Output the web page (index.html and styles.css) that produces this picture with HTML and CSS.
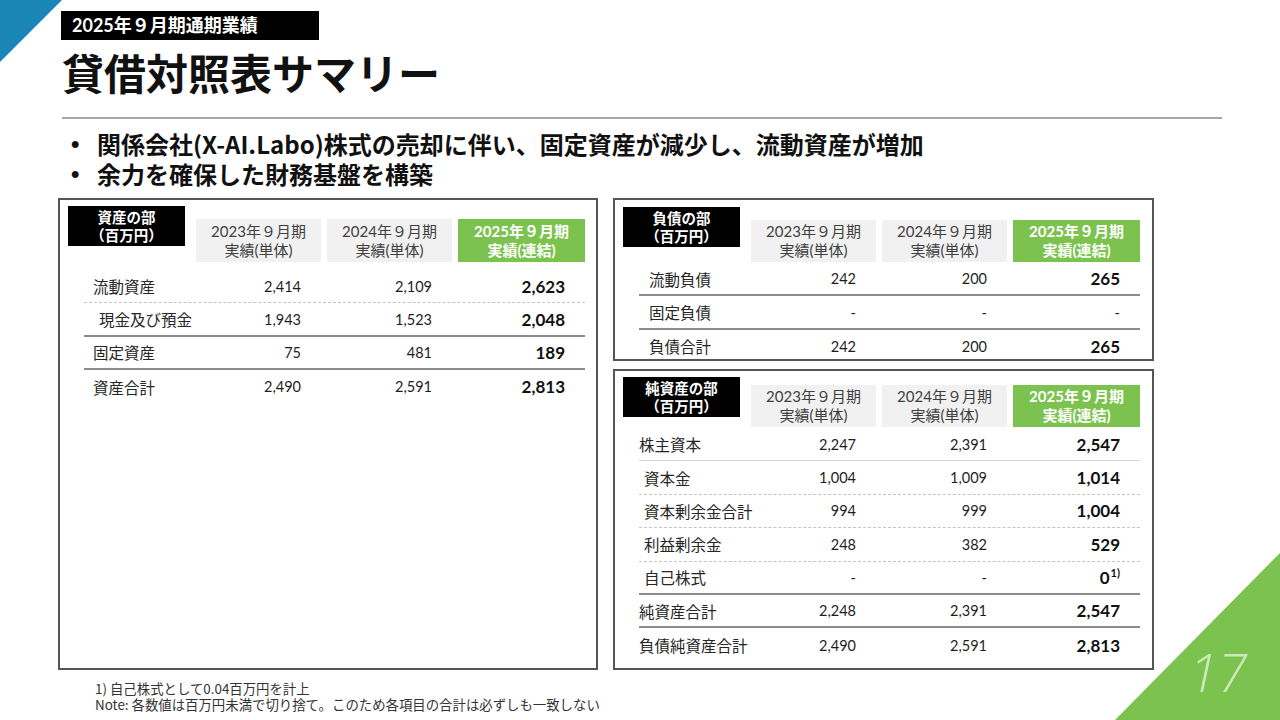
FILE: index.html
```html
<!DOCTYPE html>
<html lang="ja">
<head>
<meta charset="utf-8">
<title>貸借対照表サマリー</title>
<link rel="stylesheet" href="styles.css">
</head>
<body>
<div class="slide">
  <div class="corner-tl"></div>
  <div class="corner-br"></div>
  <div class="page-no">17</div>

  <header class="head">
    <div class="tag">2025年９月期通期業績</div>
    <h1 class="title">貸借対照表サマリー</h1>
    <div class="rule"></div>
    <ul class="bullets">
      <li>関係会社(X-AI.Labo)株式の売却に伴い、固定資産が減少し、流動資産が増加</li>
      <li>余力を確保した財務基盤を構築</li>
    </ul>
  </header>

  <div class="panels">
    <section class="panel panel-assets">
      <div class="thead">
        <div class="label">資産の部<br>（百万円）</div>
        <div class="hcell">2023年９月期<br>実績(単体)</div>
        <div class="hcell">2024年９月期<br>実績(単体)</div>
        <div class="hcell hl">2025年９月期<br>実績(連結)</div>
      </div>
      <div class="rows">
        <div class="row dot"><span class="name">流動資産</span><span class="v">2,414</span><span class="v">2,109</span><span class="v b">2,623</span></div>
        <div class="row solid"><span class="name ind">現金及び預金</span><span class="v">1,943</span><span class="v">1,523</span><span class="v b">2,048</span></div>
        <div class="row solid"><span class="name">固定資産</span><span class="v">75</span><span class="v">481</span><span class="v b">189</span></div>
        <div class="row"><span class="name">資産合計</span><span class="v">2,490</span><span class="v">2,591</span><span class="v b">2,813</span></div>
      </div>
    </section>

    <div class="right-col">
      <section class="panel panel-liab">
        <div class="thead">
          <div class="label">負債の部<br>（百万円）</div>
          <div class="hcell">2023年９月期<br>実績(単体)</div>
          <div class="hcell">2024年９月期<br>実績(単体)</div>
          <div class="hcell hl">2025年９月期<br>実績(連結)</div>
        </div>
        <div class="rows">
          <div class="row solid"><span class="name">流動負債</span><span class="v">242</span><span class="v">200</span><span class="v b">265</span></div>
          <div class="row solid"><span class="name">固定負債</span><span class="v">-</span><span class="v">-</span><span class="v">-</span></div>
          <div class="row"><span class="name">負債合計</span><span class="v">242</span><span class="v">200</span><span class="v b">265</span></div>
        </div>
      </section>

      <section class="panel panel-eq">
        <div class="thead">
          <div class="label">純資産の部<br>（百万円）</div>
          <div class="hcell">2023年９月期<br>実績(単体)</div>
          <div class="hcell">2024年９月期<br>実績(単体)</div>
          <div class="hcell hl">2025年９月期<br>実績(連結)</div>
        </div>
        <div class="rows">
          <div class="row thin"><span class="name">株主資本</span><span class="v">2,247</span><span class="v">2,391</span><span class="v b">2,547</span></div>
          <div class="row dot"><span class="name ind">資本金</span><span class="v">1,004</span><span class="v">1,009</span><span class="v b">1,014</span></div>
          <div class="row dot"><span class="name ind">資本剰余金合計</span><span class="v">994</span><span class="v">999</span><span class="v b">1,004</span></div>
          <div class="row dot"><span class="name ind">利益剰余金</span><span class="v">248</span><span class="v">382</span><span class="v b">529</span></div>
          <div class="row solid"><span class="name ind">自己株式</span><span class="v">-</span><span class="v">-</span><span class="v b">0<sup class="fn">1)</sup></span></div>
          <div class="row solid"><span class="name">純資産合計</span><span class="v">2,248</span><span class="v">2,391</span><span class="v b">2,547</span></div>
          <div class="row"><span class="name">負債純資産合計</span><span class="v">2,490</span><span class="v">2,591</span><span class="v b">2,813</span></div>
        </div>
      </section>
    </div>
  </div>

  <div class="notes">
    <p>1) 自己株式として0.04百万円を計上</p>
    <p>Note: 各数値は百万円未満で切り捨て。このため各項目の合計は必ずしも一致しない</p>
  </div>
</div>
</body>
</html>
```

FILE: styles.css
```css
* { box-sizing: border-box; }

html, body {
  margin: 0;
  padding: 0;
  background: #ffffff;
}

body {
  font-family: "Noto Sans CJK JP", "Noto Sans", sans-serif;
  color: #222222;
}

.slide {
  position: relative;
  width: 1280px;
  height: 720px;
  overflow: hidden;
  padding: 11px 0 0 58px;
  background: #ffffff;
}

/* corner decorations */
.corner-tl {
  position: absolute;
  left: 0;
  top: 0;
  width: 62px;
  height: 62px;
  background: #1a86b8;
  clip-path: polygon(0 0, 100% 0, 0 100%);
}

.corner-br {
  position: absolute;
  left: 1115px;
  top: 553px;
  width: 165px;
  height: 167px;
  background: #7cc24e;
  clip-path: polygon(100% 0, 100% 100%, 0 100%);
}

.page-no {
  position: absolute;
  right: 33px;
  top: 645px;
  font-family: "Open Sans", "Liberation Sans", sans-serif;
  font-weight: 300;
  font-style: italic;
  font-size: 53px;
  line-height: 54px;
  color: rgba(255, 255, 255, 0.62);
}

/* header */
.head {
  margin-left: 3px;
}

.tag {
  width: 258px;
  height: 29px;
  background: #000000;
  color: #ffffff;
  font-family: "Lato", "Noto Sans CJK JP", sans-serif;
  font-weight: 700;
  font-size: 18px;
  line-height: 29px;
  padding-left: 11px;
}

.title {
  margin: 6px 0 0 1px;
  font-size: 42px;
  line-height: 52px;
  font-weight: 700;
  color: #111111;
  letter-spacing: 0;
}

.rule {
  margin: 19px 0 0 1px;
  width: 1160px;
  height: 2px;
  background: #a6a6a6;
}

.bullets {
  list-style: none;
  margin: 10px 0 0 0;
  padding: 0;
}

.bullets li {
  display: flex;
  font-size: 24px;
  line-height: 30px;
  font-weight: 700;
  color: #111111;
  white-space: nowrap;
}

.bullets li::before {
  content: "•";
  width: 26px;
  margin-left: 10px;
  flex: none;
  font-family: "Liberation Sans", sans-serif;
  font-weight: 700;
}

/* panels */
.panels {
  display: flex;
  gap: 15px;
  margin-top: 9px;
}

.right-col {
  display: flex;
  flex-direction: column;
  gap: 8px;
}

.panel {
  border: 2px solid #555555;
  padding: 6px 0 0 8px;
}

.panel-assets {
  width: 540px;
  height: 472px;
}

.panel-liab {
  width: 541px;
  height: 163px;
  padding-top: 7px;
}

.panel-eq {
  width: 541px;
  height: 301px;
  padding-top: 6px;
}

.thead {
  display: grid;
  grid-template-columns: 122px 125px 125px 127px;
  column-gap: 6px;
  height: 56px;
}

.panel-liab .thead { height: 55px; }
.panel-eq .thead { height: 50px; }

.label {
  align-self: start;
  width: 117px;
  height: 40px;
  background: #000000;
  color: #ffffff;
  font-weight: 700;
  font-size: 14.5px;
  line-height: 18px;
  text-align: center;
  padding-top: 2px;
}

.hcell {
  align-self: end;
  height: 43px;
  background: #f1f1f1;
  color: #404040;
  font-family: "Lato", "Noto Sans CJK JP", sans-serif;
  font-size: 15px;
  line-height: 19px;
  text-align: center;
  display: flex;
  flex-direction: column;
  justify-content: center;
}

.panel-liab .hcell,
.panel-eq .hcell { height: 42px; }

.hcell.hl {
  background: #7cc24e;
  color: #ffffff;
  font-weight: 700;
}

.rows {
  margin: 8px 0 0 16px;
  width: 501px;
}

.panel-liab .rows,
.panel-eq .rows { margin-top: 1px; }

.row {
  display: grid;
  grid-template-columns: 106px 125px 125px 127px;
  column-gap: 6px;
  align-items: center;
  height: 33.4px;
}

.row.dot { border-bottom: 1px dashed #c4c4c4; }
.row.solid { border-bottom: 2px solid #8c8c8c; }
.row.thin { border-bottom: 1px solid #d6d6d6; }

.name {
  font-size: 15.5px;
  color: #262626;
  padding-left: 9px;
  white-space: nowrap;
}

.name.ind { padding-left: 15px; }

.panel-liab .name { padding-left: 10px; }
.panel-eq .name { padding-left: 0; }
.panel-eq .name.ind { padding-left: 5px; }

.v {
  font-family: "Lato", "Open Sans", sans-serif;
  font-size: 14.5px;
  color: #1e1e1e;
  text-align: right;
  padding-right: 20px;
}

.v.b {
  font-weight: 700;
  font-size: 17px;
  color: #111111;
}

.fn {
  font-size: 11px;
  line-height: 0;
  vertical-align: 7px;
  margin-left: 1px;
}

/* notes */
.notes {
  margin: 10px 0 0 37px;
  font-size: 13.4px;
  line-height: 16px;
  color: #333333;
}

.notes p {
  margin: 0;
  white-space: nowrap;
}
```
